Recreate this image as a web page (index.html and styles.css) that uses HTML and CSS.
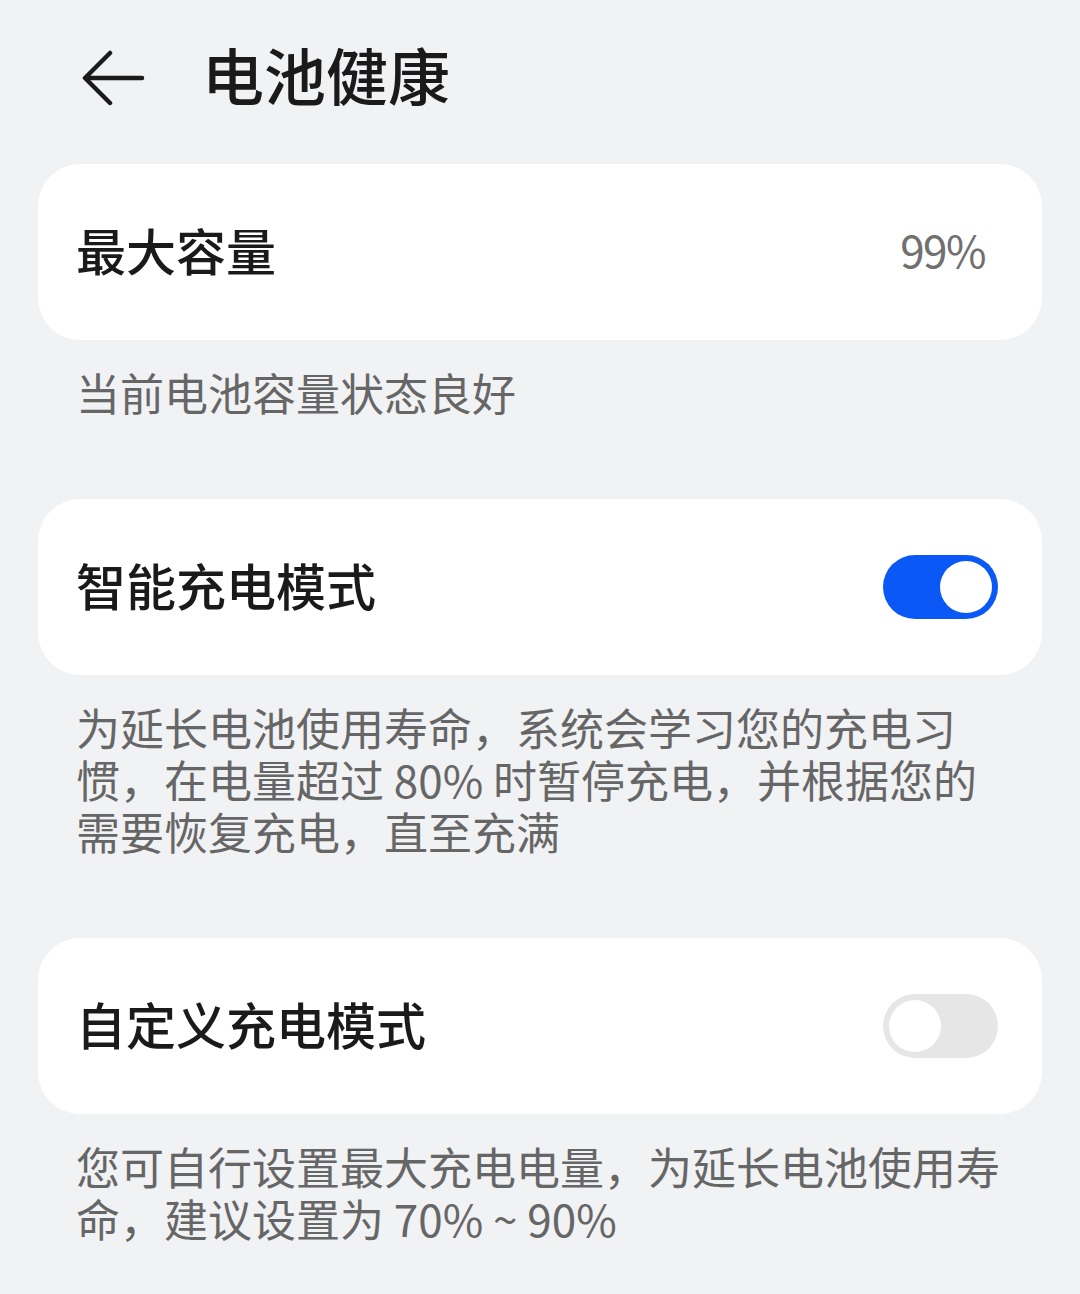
FILE: index.html
```html
<!DOCTYPE html>
<html lang="zh-CN">
<head>
<meta charset="utf-8">
<title>电池健康</title>
<link rel="stylesheet" href="styles.css">
</head>
<body>
<div class="page">
  <header class="header">
    <svg class="back" width="64" height="56" viewBox="0 0 64 56" aria-hidden="true">
      <path d="M60 28 H4 M28 3 L3 28 L28 53" fill="none" stroke="#1a1a1a" stroke-width="4.5" stroke-linecap="round" stroke-linejoin="round"/>
    </svg>
    <h1 class="title">电池健康</h1>
  </header>

  <section class="card">
    <span class="card-label">最大容量</span>
    <span class="card-value">99%</span>
  </section>
  <p class="note">当前电池容量状态良好</p>

  <section class="card card-toggle">
    <span class="card-label">智能充电模式</span>
    <span class="switch switch-on"><span class="knob"></span></span>
  </section>
  <p class="note">为延长电池使用寿命，系统会学习您的充电习惯，在电量超过 80% 时暂停充电，并根据您的需要恢复充电，直至充满</p>

  <section class="card card-toggle">
    <span class="card-label">自定义充电模式</span>
    <span class="switch switch-off"><span class="knob"></span></span>
  </section>
  <p class="note">您可自行设置最大充电电量，为延长电池使用寿命，建议设置为 70% ~ 90%</p>
</div>
</body>
</html>
```

FILE: styles.css
```css
* { box-sizing: border-box; }
html, body {
  margin: 0;
  padding: 0;
  background: #f1f2f4;
}
body {
  font-family: "Noto Sans CJK SC", "Noto Sans", sans-serif;
  color: #191919;
}
.page {
  width: 1080px;
  padding: 0 38px;
}
.header {
  height: 156px;
  display: flex;
  align-items: center;
  margin-bottom: 8px;
}
.back {
  margin-left: 44px;
  display: block;
}
.title {
  margin: 0 0 0 56px;
  font-size: 62px;
  font-weight: 500;
  line-height: 1;
  color: #1a1a1a;
  position: relative;
  top: -4px;
}
.card {
  height: 176px;
  background: #ffffff;
  border-radius: 42px;
  display: flex;
  align-items: center;
  justify-content: space-between;
  padding: 0 57px 6px 38px;
}
.card-toggle {
  padding: 0 44px 0 38px;
}
.card-toggle .card-label {
  position: relative;
  top: -3px;
}
.card-label {
  font-size: 50px;
  font-weight: 500;
  color: #1a1a1a;
  line-height: 1;
}
.card-value {
  font-size: 44px;
  font-weight: 400;
  color: #707070;
  letter-spacing: -1.5px;
  line-height: 1;
}
.note {
  margin: 26px 0 81px;
  padding: 0 38px 0 38px;
  font-size: 44px;
  line-height: 52px;
  color: #666666;
  font-weight: 400;
}
.switch {
  width: 115px;
  height: 64px;
  border-radius: 32px;
  display: flex;
  align-items: center;
  padding: 0 6px;
}
.switch-on {
  background: #0a59f7;
  justify-content: flex-end;
}
.switch-off {
  background: #e6e6e6;
  justify-content: flex-start;
}
.knob {
  width: 52px;
  height: 52px;
  border-radius: 50%;
  background: #ffffff;
}
```
